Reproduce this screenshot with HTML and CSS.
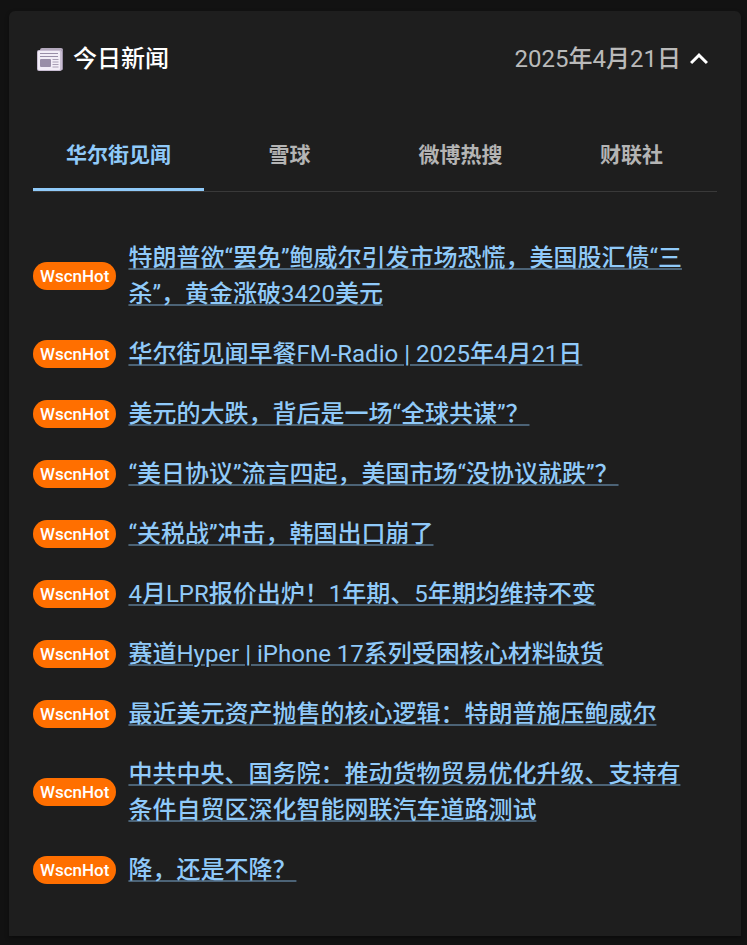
FILE: index.html
```html
<!DOCTYPE html>
<html lang="zh-CN">
<head>
<meta charset="utf-8">
<meta name="viewport" content="width=device-width, initial-scale=1">
<title>今日新闻</title>
<link rel="stylesheet" href="styles.css">
</head>
<body>
<main class="card">
  <header class="card-header">
    <h1 class="title">
      <svg class="news-icon" viewBox="0 0 26 24" aria-hidden="true">
        <rect x="3" y="1" width="23" height="21" rx="2" fill="#b4a9bd"/>
        <rect x="24" y="3" width="2" height="20" rx="1" fill="#998ea4"/>
        <rect x="0" y="3" width="25" height="21" rx="2" fill="#c8bdd2"/>
        <rect x="1" y="4" width="22" height="19" rx="1" fill="#f2edf7"/>
        <path d="M3 6.500h18M3 9.500h18" stroke="#998ea8" stroke-width="1.2"/>
        <rect x="3" y="12" width="11" height="8" rx="1" fill="#998ea8"/>
        <path d="M15.500 12.500h6M15.500 15h6M15.500 17.500h6M15.500 20h6" stroke="#aaa0b6" stroke-width="1"/>
      </svg>
      今日新闻
    </h1>
    <button class="toggle" type="button" aria-expanded="true">
      <span class="date">2025年4月21日</span>
      <svg class="chevron" viewBox="0 0 24 24" aria-hidden="true"><path d="M12 8l-6 6 1.410 1.410L12 10.830l4.590 4.580L18 14z" fill="currentColor"/></svg>
    </button>
  </header>
  <div class="tabs" role="tablist">
    <button class="tab tab-active" type="button" role="tab" aria-selected="true">华尔街见闻</button>
    <button class="tab" type="button" role="tab" aria-selected="false">雪球</button>
    <button class="tab" type="button" role="tab" aria-selected="false">微博热搜</button>
    <button class="tab" type="button" role="tab" aria-selected="false">财联社</button>
  </div>
  <ul class="news">
    <li class="item"><span class="badge">WscnHot</span><span class="headline"><a href="#">特朗普欲“罢免”鲍威尔引发市场恐慌，美国股汇债“三杀”，黄金涨破3420美元</a></span></li>
    <li class="item"><span class="badge">WscnHot</span><span class="headline"><a href="#">华尔街见闻早餐FM-Radio | 2025年4月21日</a></span></li>
    <li class="item"><span class="badge">WscnHot</span><span class="headline"><a href="#">美元的大跌，背后是一场“全球共谋”？</a></span></li>
    <li class="item"><span class="badge">WscnHot</span><span class="headline"><a href="#">“美日协议”流言四起，美国市场“没协议就跌”？</a></span></li>
    <li class="item"><span class="badge">WscnHot</span><span class="headline"><a href="#">“关税战”冲击，韩国出口崩了</a></span></li>
    <li class="item"><span class="badge">WscnHot</span><span class="headline"><a href="#">4月LPR报价出炉！1年期、5年期均维持不变</a></span></li>
    <li class="item"><span class="badge">WscnHot</span><span class="headline"><a href="#">赛道Hyper | iPhone 17系列受困核心材料缺货</a></span></li>
    <li class="item"><span class="badge">WscnHot</span><span class="headline"><a href="#">最近美元资产抛售的核心逻辑：特朗普施压鲍威尔</a></span></li>
    <li class="item"><span class="badge">WscnHot</span><span class="headline"><a href="#">中共中央、国务院：推动货物贸易优化升级、支持有条件自贸区深化智能网联汽车道路测试</a></span></li>
    <li class="item"><span class="badge">WscnHot</span><span class="headline"><a href="#">降，还是不降？</a></span></li>
  </ul>
</main>
</body>
</html>
```
FILE: styles.css
```css
* { box-sizing: border-box; }

body {
  margin: 0;
  padding: 11px 6px 9px 9px;
  background: #121212;
  color: #fff;
  font-family: Roboto, "Noto Sans CJK SC Medium", "Noto Sans CJK SC", sans-serif;
}

button {
  margin: 0;
  padding: 0;
  border: 0;
  background: none;
  font: inherit;
  cursor: pointer;
}

.card {
  padding: 24px 24px 36px;
  border-radius: 6px 6px 0 0;
  background: #1e1e1e;
  box-shadow: 0 2px 4px rgba(0, 0, 0, 0.4);
}

.card-header {
  display: flex;
  align-items: center;
  justify-content: space-between;
  height: 48px;
  padding-left: 4px;
}

.title {
  display: flex;
  align-items: center;
  gap: 10px;
  margin: 0;
  font-size: 24px;
  font-weight: 500;
  line-height: 36px;
}

.news-icon {
  width: 26px;
  height: 24px;
}

.toggle {
  display: flex;
  align-items: center;
  color: #fff;
  font-size: 24px;
  line-height: 36px;
}

.date { color: #bababa; }

.chevron {
  width: 36px;
  height: 36px;
}

.tabs {
  display: grid;
  grid-template-columns: repeat(4, 1fr);
  margin-top: 36px;
  border-bottom: 1px solid #393939;
}

.tab {
  height: 72px;
  padding-bottom: 2px;
  border-bottom: 3px solid transparent;
  color: #b4b4b4;
  font-family: Roboto, "Noto Sans CJK SC", sans-serif;
  font-size: 21px;
  font-weight: 700;
}

.tab-active {
  border-color: #90caf9;
  color: #90caf9;
}

.news {
  margin: 36px 0 0;
  padding: 0 16px 0 0;
  list-style: none;
}

.item {
  display: flex;
  align-items: center;
  gap: 12px;
  padding: 12px 0;
}

.badge {
  flex: none;
  padding: 0 7px;
  border-radius: 14px;
  background: #ff6f00;
  font-size: 17px;
  font-weight: 500;
  line-height: 28px;
}

.headline {
  font-size: 24px;
  font-weight: 400;
  line-height: 36px;
}

.headline a {
  color: #90caf9;
  text-decoration: underline 2px rgba(144, 202, 249, 0.4);
  text-underline-offset: 2px;
}
```
